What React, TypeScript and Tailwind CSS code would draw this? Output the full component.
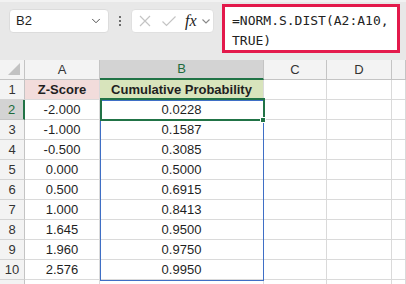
import { ChevronDown } from 'lucide-react'

const data = [
  ['-2.000', '0.0228'],
  ['-1.000', '0.1587'],
  ['-0.500', '0.3085'],
  ['0.000', '0.5000'],
  ['0.500', '0.6915'],
  ['1.000', '0.8413'],
  ['1.645', '0.9500'],
  ['1.960', '0.9750'],
  ['2.576', '0.9950'],
]

const font = { fontFamily: '"Liberation Sans", Arial, sans-serif' }

function Cell({ children, className = '' }: { children?: React.ReactNode; className?: string }) {
  return (
    <div className={`h-[20px] flex items-center justify-center border-r border-b border-[#dadada] text-[13px] text-[#1f1f1f] ${className}`}>
      {children}
    </div>
  )
}

function RowHead({ children, selected = false }: { children?: React.ReactNode; selected?: boolean }) {
  return (
    <div
      className={`h-[20px] flex items-center justify-center border-b text-[13px] ${
        selected
          ? 'bg-[#d3d3d3] text-[#1d6b3c] border-b-[#c4c4c4] border-r-2 border-r-[#217346]'
          : 'bg-[#f3f3f3] text-[#333] border-b-[#d4d4d4] border-r border-r-[#c4c4c4]'
      }`}
    >
      {children}
    </div>
  )
}

function ColHead({ children, selected = false }: { children?: React.ReactNode; selected?: boolean }) {
  return (
    <div
      className={`h-[20px] flex items-center justify-center border-r border-r-[#c4c4c4] text-[13px] ${
        selected
          ? 'bg-[#d3d3d3] text-[#1d6b3c] border-b-2 border-b-[#217346]'
          : 'bg-[#f3f3f3] text-[#333] border-b border-b-[#c4c4c4]'
      }`}
    >
      {children}
    </div>
  )
}

export default function App() {
  return (
    <div className="w-[406px] h-[284px] overflow-hidden bg-white" style={font}>
      {/* formula bar */}
      <div className="h-[60px] bg-[#e8e8e8] border-t-2 border-t-[#f2f2f2] flex items-start pl-[9px]">
        <div className="mt-[7px] w-[100px] h-[24px] bg-white rounded-[4px] border border-[#dcdcdc] flex items-center justify-between pl-[6px] pr-[5px]">
          <span className="text-[13px] text-[#1f1f1f]">B2</span>
          <ChevronDown size={14} strokeWidth={1.6} className="text-[#444]" />
        </div>
        <div className="w-[22px] h-[24px] mt-[7px] flex flex-col items-center justify-center gap-[2px]">
          <span className="w-[2px] h-[2px] bg-[#444] rounded-full" />
          <span className="w-[2px] h-[2px] bg-[#444] rounded-full" />
          <span className="w-[2px] h-[2px] bg-[#444] rounded-full" />
        </div>
        <div className="mt-[7px] w-[83px] h-[24px] bg-white rounded-[4px] border border-[#e0e0e0] flex items-center pl-[5px]">
          <svg width="14" height="14" viewBox="0 0 14 14" className="ml-[1px]">
            <path d="M2 2 L12 12 M12 2 L2 12" stroke="#c4c4c4" strokeWidth="1.2" fill="none" />
          </svg>
          <svg width="16" height="14" viewBox="0 0 16 14" className="ml-[9px]">
            <path d="M1.5 7.5 L5.5 11.5 L14.5 2.5" stroke="#c4c4c4" strokeWidth="1.2" fill="none" />
          </svg>
          <span
            className="ml-[8px] text-[16px] italic text-[#222] leading-none"
            style={{ fontFamily: '"Liberation Serif", "Times New Roman", serif' }}
          >
            fx
          </span>
          <svg width="10" height="8" viewBox="0 0 10 8" className="ml-[4px]">
            <path d="M1.5 2.5 L5 6 L8.5 2.5" stroke="#888" strokeWidth="1.1" fill="none" />
          </svg>
        </div>
        <div
          className="ml-[8px] mt-[2px] w-[178px] h-[49px] bg-white border-[3px] border-[#e3194b] pl-[7px] pt-[4px] text-[13px] leading-[20px] text-[#222]"
          style={{ fontFamily: '"DejaVu Sans Mono", "Liberation Mono", monospace' }}
        >
          <div>=NORM.S.DIST(A2:A10,</div>
          <div>TRUE)</div>
        </div>
      </div>

      {/* sheet */}
      <div className="relative">
        <div className="grid grid-cols-[25px_75px_164px_63px_65px_14px]">
          <div className="h-[20px] bg-[#f3f3f3] border-r border-b border-[#c4c4c4] relative">
            <svg width="14" height="14" viewBox="0 0 14 14" className="absolute right-[3px] bottom-[3px]">
              <path d="M13 1 L13 13 L1 13 Z" fill="#c2c2c2" />
            </svg>
          </div>
          <ColHead>A</ColHead>
          <ColHead selected>B</ColHead>
          <ColHead>C</ColHead>
          <ColHead>D</ColHead>
          <ColHead />

          <RowHead>1</RowHead>
          <Cell className="bg-[#f2dcdb] font-bold">Z-Score</Cell>
          <Cell className="bg-[#d8e4bc] font-bold">Cumulative Probability</Cell>
          <Cell />
          <Cell />
          <Cell />

          {data.map(([z, p], i) => (
            <Row key={i} n={i + 2} z={z} p={p} />
          ))}

          <RowHead />
          <Cell />
          <Cell />
          <Cell />
          <Cell />
          <Cell />
        </div>

        {/* spill range highlight */}
        <div className="absolute left-[100px] top-[40px] w-[164px] h-[181px] border-[1.5px] border-[#3f6fc6] pointer-events-none" />
        {/* active cell */}
        <div className="absolute left-[100px] top-[38px] w-[165px] h-[23px] border-2 border-[#217346] pointer-events-none" />
        <div className="absolute left-[260px] top-[57px] w-[6px] h-[6px] bg-[#217346] border border-white" />
      </div>
    </div>
  )
}

function Row({ n, z, p }: { n: number; z: string; p: string }) {
  return (
    <>
      <RowHead selected={n === 2}>{n}</RowHead>
      <Cell>{z}</Cell>
      <Cell>{p}</Cell>
      <Cell />
      <Cell />
      <Cell />
    </>
  )
}
